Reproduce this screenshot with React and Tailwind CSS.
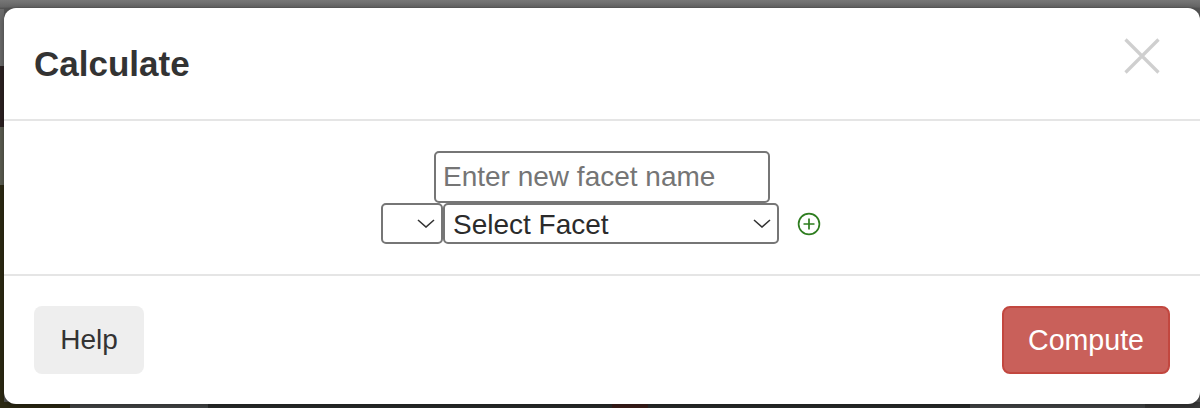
import React from "react";

function Chevron() {
  return (
    <svg className="absolute right-[8px] top-[16px] pointer-events-none" width="18" height="9" viewBox="0 0 18 9" fill="none">
      <path d="M1 1 L9 8 L17 1" stroke="#333" strokeWidth="1.6" />
    </svg>
  );
}

function Backdrop() {
  return (
    <svg className="absolute inset-0" width="1200" height="408" viewBox="0 0 1200 408" preserveAspectRatio="none">
      <defs>
        <linearGradient id="top" x1="0" y1="0" x2="0" y2="1">
          <stop offset="0" stopColor="#777777" />
          <stop offset="0.75" stopColor="#666666" />
          <stop offset="1" stopColor="#4f4f4f" />
        </linearGradient>
      </defs>
      <rect x="0" y="0" width="1200" height="408" fill="#555555" />
      <rect x="0" y="0" width="1200" height="9" fill="url(#top)" />
      <rect x="0" y="9" width="4" height="57" fill="#6b6b6b" />
      <rect x="0" y="66" width="4" height="61" fill="#2c2122" />
      <rect x="0" y="127" width="4" height="58" fill="#5c5e52" />
      <rect x="0" y="185" width="4" height="223" fill="#2d2a13" />
      <rect x="0" y="402" width="70" height="6" fill="#2d2a13" />
      <rect x="70" y="402" width="138" height="6" fill="#47494a" />
      <rect x="208" y="402" width="762" height="6" fill="#2b2e2d" />
      <rect x="612" y="402" width="36" height="6" fill="#3f1f1a" />
      <rect x="970" y="402" width="175" height="6" fill="#484a4b" />
      <rect x="1145" y="402" width="55" height="6" fill="#3a3a3a" />
    </svg>
  );
}

export default function App() {
  return (
    <div className="relative w-[1200px] h-[408px] overflow-hidden pl-[4px] pt-[8px] font-['Liberation_Sans',Arial,sans-serif]">
      <Backdrop />
      <div className="relative w-[1196px] h-[396px] flex flex-col bg-white rounded-[12px] text-[#333333] shadow-[0_2px_6px_rgba(0,0,0,0.4)]">
        <header className="h-[113px] flex items-center justify-between border-b-2 border-[#e5e5e5] pl-[30px] pr-[40px] shrink-0">
          <h4 className="text-[35px] font-bold leading-none">Calculate</h4>
          <svg width="36" height="36" viewBox="0 0 36 36" className="mb-[16px]" fill="none">
            <path d="M1.5 1.5 L34.5 34.5 M34.5 1.5 L1.5 34.5" stroke="#cfcfcf" strokeWidth="3.2" />
          </svg>
        </header>

        <main className="h-[153px] flex flex-col items-center pt-[30px] shrink-0">
          <input
            readOnly
            placeholder="Enter new facet name"
            className="w-[336px] h-[52px] border-2 border-[#767676] rounded-[5px] pl-[7px] text-[28px] placeholder:text-[#757575] outline-none"
          />
          <div className="flex items-center w-[440px] -translate-x-px">
            <div className="relative w-[62px] h-[41px]">
              <select className="appearance-none w-full h-full border-2 border-[#767676] rounded-[5px] bg-white" />
              <Chevron />
            </div>
            <div className="relative w-[336px] h-[41px]">
              <select defaultValue="Select Facet" className="appearance-none w-full h-full border-2 border-[#767676] rounded-[5px] bg-white pl-[8px] pt-[2px] text-[28px] leading-[32px] text-[#2b2b2b] outline-none">
                <option>Select Facet</option>
              </select>
              <Chevron />
            </div>
            <svg className="ml-[18px]" width="24" height="24" viewBox="0 0 24 24" fill="none" stroke="#2e7d1f" strokeWidth="1.7">
              <circle cx="12" cy="12" r="10.4" />
              <path d="M12 6.5 V17.5 M6.5 12 H17.5" />
            </svg>
          </div>
        </main>

        <footer className="flex-1 flex items-start justify-between border-t-2 border-[#e5e5e5] pt-[30px] px-[30px]">
          <button className="w-[110px] h-[68px] rounded-[8px] bg-[#eeeeee] text-[28px] text-[#333333]">Help</button>
          <button className="w-[168px] h-[68px] rounded-[8px] bg-[#c9605a] border-2 border-[#c2473f] text-[28.6px] text-white">Compute</button>
        </footer>
      </div>
    </div>
  );
}
